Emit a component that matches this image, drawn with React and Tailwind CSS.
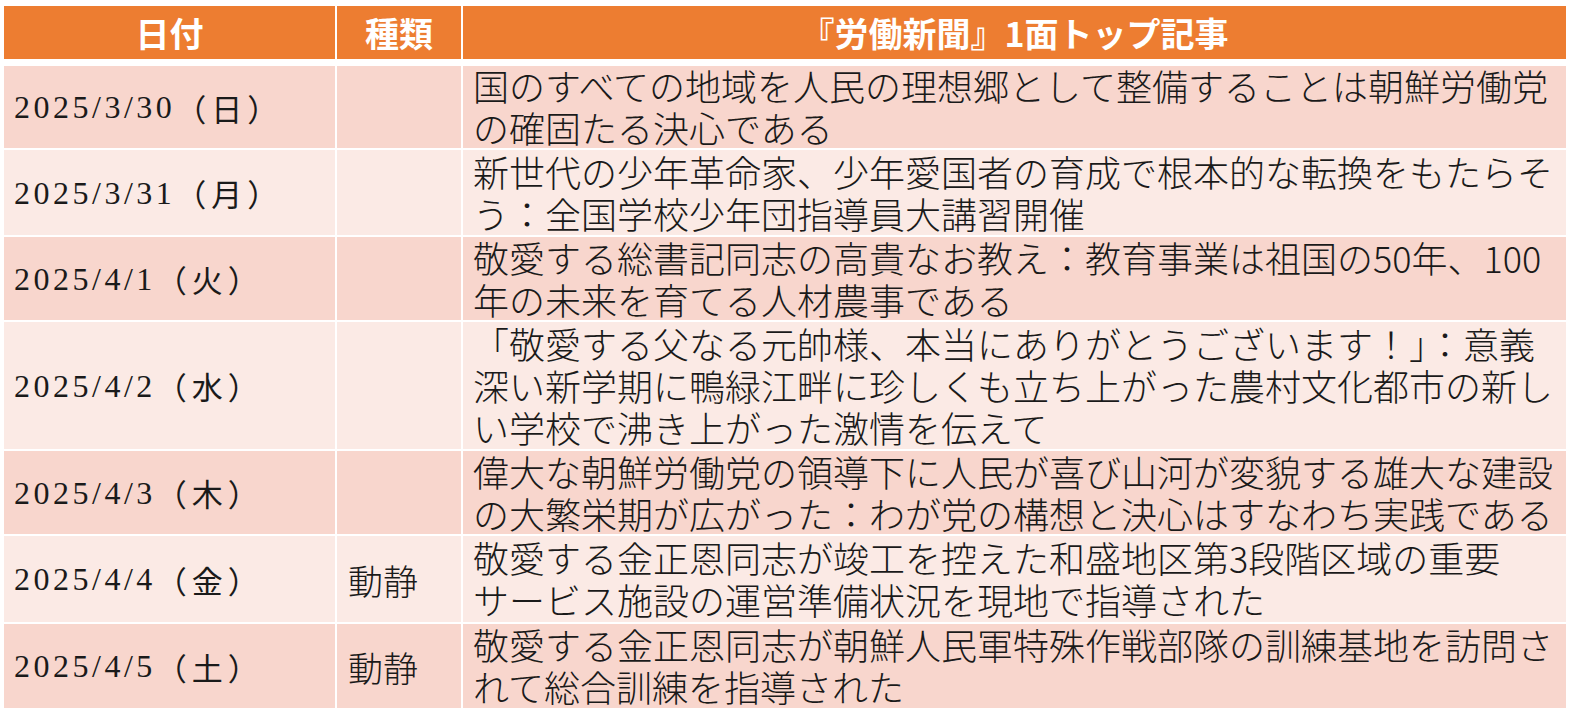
import React from "react";

const rows = [
  { d: "2025/3/30", w: "日", k: "", h: "h-[82px]", dark: true, t: ["国のすべての地域を人民の理想郷として整備することは朝鮮労働党", "の確固たる決心である"] },
  { d: "2025/3/31", w: "月", k: "", h: "h-[85px]", dark: false, t: ["新世代の少年革命家、少年愛国者の育成で根本的な転換をもたらそ", "う：全国学校少年団指導員大講習開催"] },
  { d: "2025/4/1", w: "火", k: "", h: "h-[83px]", dark: true, t: ["敬愛する総書記同志の高貴なお教え：教育事業は祖国の50年、100", "年の未来を育てる人材農事である"] },
  { d: "2025/4/2", w: "水", k: "", h: "h-[127px]", dark: false, t: ["「敬愛する父なる元帥様、本当にありがとうございます！」：意義", "深い新学期に鴨緑江畔に珍しくも立ち上がった農村文化都市の新し", "い学校で沸き上がった激情を伝えて"] },
  { d: "2025/4/3", w: "木", k: "", h: "h-[83px]", dark: true, t: ["偉大な朝鮮労働党の領導下に人民が喜び山河が変貌する雄大な建設", "の大繁栄期が広がった：わが党の構想と決心はすなわち実践である"] },
  { d: "2025/4/4", w: "金", k: "動静", h: "h-[86px]", dark: false, t: ["敬愛する金正恩同志が竣工を控えた和盛地区第3段階区域の重要", "サービス施設の運営準備状況を現地で指導された"] },
  { d: "2025/4/5", w: "土", k: "動静", h: "h-[84px]", dark: true, t: ["敬愛する金正恩同志が朝鮮人民軍特殊作戦部隊の訓練基地を訪問さ", "れて総合訓練を指導された"] },
];

const jp = "font-['Noto_Sans_CJK_JP',sans-serif]";

export default function App() {
  return (
    <div className="bg-white w-[1569px] h-[718px] pt-[6px] pl-[4px] overflow-hidden">
      <div className="w-[1562px] flex flex-col">
        <div className={`grid grid-cols-[331px_124px_1103px] grid-rows-[100%] gap-x-[2px] h-[53px] text-white font-bold text-[34px] ${jp}`}>
          <div className="bg-[#ED7D31] flex items-center justify-center leading-none">日付</div>
          <div className="bg-[#ED7D31] flex items-center justify-center leading-none">種類</div>
          <div className="bg-[#ED7D31] flex items-center justify-center leading-none">『労働新聞』1面トップ記事</div>
        </div>
        <div className="mt-[7px] flex flex-col gap-[2px]">
          {rows.map((r, i) => {
            const bg = r.dark ? "bg-[#F8D6CD]" : "bg-[#FBEAE5]";
            return (
              <div key={i} className={`grid grid-cols-[331px_124px_1103px] grid-rows-[100%] gap-x-[2px] shrink-0 ${r.h}`}>
                <div className={`${bg} min-h-0 flex items-center pl-[10px] text-[#1a1a1a] whitespace-nowrap`}>
                  <span className="font-['Liberation_Serif',serif] text-[32px] tracking-[3.5px] leading-none">{r.d}</span>
                  <span className={`${jp} text-[31px] leading-none`}>（</span>
                  <span className={`${jp} text-[31px] leading-none mx-[5px]`}>{r.w}</span>
                  <span className={`${jp} text-[31px] leading-none`}>）</span>
                </div>
                <div className={`${bg} min-h-0 flex items-center pl-[11px] text-[35px] text-[#1a1a1a] ${jp} font-light leading-none`}>
                  {r.k}
                </div>
                <div className={`${bg} min-h-0 flex flex-col justify-center pl-[10px] pb-[2px] text-[36px] leading-[42px] text-[#1a1a1a] ${jp} font-light whitespace-nowrap`}>
                  {r.t.map((l, j) => (
                    <div key={j} className="shrink-0">{l}</div>
                  ))}
                </div>
              </div>
            );
          })}
        </div>
      </div>
    </div>
  );
}
